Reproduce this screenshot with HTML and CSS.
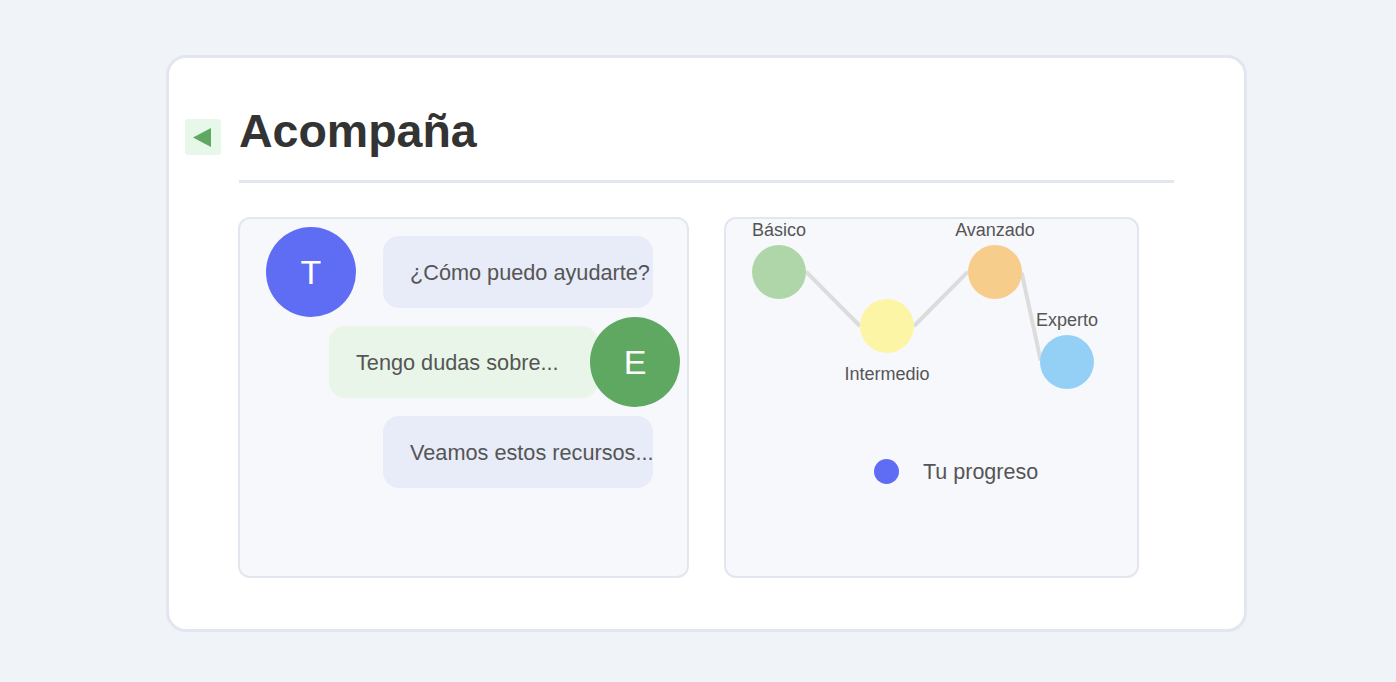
FILE: index.html
```html
<!DOCTYPE html>
<html lang="es">
<head>
  <meta charset="UTF-8">
  <meta name="viewport" content="width=device-width,initial-scale=1">
  <title>Acompaña</title>
  <link rel="stylesheet" href="styles.css">
</head>
<body>

  <div class="card">
    <!-- Botón volver -->
    <button class="back" aria-label="Volver">
      <svg width="18" height="19" viewBox="0 0 18 19"><polygon points="18,0 18,19 0,9.5" fill="#5fa862"/></svg>
    </button>

    <main class="main">
      <h1>Acompaña</h1>

      <div class="panels">
        <!-- Conversación -->
        <section class="chat">
          <div class="row row-tutor">
            <div class="avatar tutor">T</div>
            <div class="bubble">¿Cómo puedo ayudarte?</div>
          </div>
          <div class="row row-user">
            <div class="bubble user">Tengo dudas sobre...</div>
            <div class="avatar student">E</div>
          </div>
          <div class="row row-reply">
            <div class="bubble">Veamos estos recursos...</div>
          </div>
        </section>

        <!-- Mapa de progreso -->
        <section class="progress">
          <div class="map">
            <svg class="links" width="411" height="225" viewBox="0 0 411 225">
              <line x1="80" y1="52.7" x2="134" y2="107"/>
              <line x1="188" y1="107" x2="242" y2="52.7"/>
              <line x1="295.7" y1="53.7" x2="314.7" y2="141.7"/>
            </svg>
            <div class="node basico"><span class="label">Básico</span></div>
            <div class="node intermedio"><span class="label below">Intermedio</span></div>
            <div class="node avanzado"><span class="label">Avanzado</span></div>
            <div class="node experto"><span class="label">Experto</span></div>
          </div>
          <div class="legend"><span class="dot"></span><span class="legend-text">Tu progreso</span></div>
        </section>
      </div>
    </main>
  </div>

</body>
</html>
```

FILE: styles.css
```css
*{margin:0;padding:0;box-sizing:border-box;}
html,body{
  height:100%;
  overflow:hidden;
  font-family:"Liberation Sans",Arial,sans-serif;
  background:#f0f3f8;
  color:#555;
}
/* Tarjeta principal */
.card{
  width:1081px; height:577px;
  margin:55px 0 0 166px;
  background:#fff; border:3px solid #e2e6ef; border-radius:20px;
  padding:46px 70px 51px 16px;
  display:flex; gap:17px; align-items:flex-start;
}
.back{
  width:36px; height:36px; margin-top:15px; flex:none;
  border:none; border-radius:3px; background:#e7f8eb;
  display:flex; align-items:center; justify-content:center;
  cursor:pointer;
}
.back svg{margin-left:-2px;}
.main{flex:1;}
.main h1{
  font-size:46.5px; line-height:54px; font-weight:bold; color:#333;
  padding-bottom:22px; border-bottom:3px solid #e2e6ef;
  margin-left:1px;
}
.panels{display:flex; gap:35px; margin-top:34px;}

/* Conversación */
.chat{
  width:451px; height:361px;
  background:#f7f8fc; border:2px solid #e2e6ef; border-radius:12px;
  padding:8px 0 0 26px;
}
.row{display:flex; align-items:center; height:90px;}
.row-tutor{gap:27px;}
.row-user{margin-left:63px;}
.row-reply{margin-left:117px;}
.avatar{
  width:90px; height:90px; border-radius:50%; flex:none;
  display:flex; align-items:center; justify-content:center;
  color:#fff; font-size:34px; position:relative;
}
.avatar.tutor{background:#5f6df5;}
.avatar.student{background:#5ea862; margin-left:-8px;}
.bubble{
  width:270px; height:72px; flex:none;
  display:flex; align-items:center;
  padding:2px 0 0 27px; border-radius:16px;
  background:#e8ecf8; font-size:21.7px; white-space:nowrap;
}
.bubble.user{width:269px; background:#e8f5e8;}

/* Progreso */
.progress{
  width:415px; height:361px;
  background:#f7f8fc; border:2px solid #e2e6ef; border-radius:12px;
}
.map{position:relative; height:225px;}
.links{position:absolute; top:0; left:0;}
.links line{stroke:#dcdcdc; stroke-width:4;}
.node{position:absolute; width:54px; height:54px; border-radius:50%;}
.basico{left:26px; top:26px; background:#aed6a8;}
.intermedio{left:134px; top:80px; background:#fdf5a6;}
.avanzado{left:242px; top:26px; background:#f7cd8c;}
.experto{left:314px; top:116px; background:#94d0f5;}
.label{
  position:absolute; left:50%; bottom:calc(100% + 4px);
  transform:translateX(-50%);
  font-size:18px; line-height:21px; white-space:nowrap; color:#555;
}
.label.below{bottom:auto; top:calc(100% + 11px);}
.legend{
  display:flex; align-items:center; gap:24px;
  margin:13px 0 0 148px; font-size:21.5px;
}
.legend-text{padding-top:3px;}
.dot{width:25px; height:25px; border-radius:50%; background:#5f6df5;}
```
